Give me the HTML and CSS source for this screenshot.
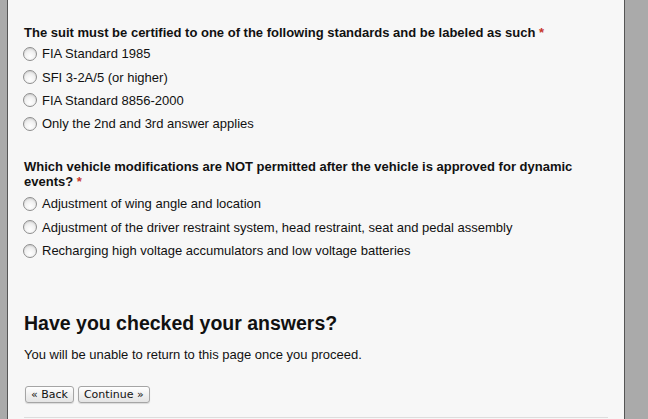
FILE: index.html
```html
<!DOCTYPE html>
<html>
<head>
<meta charset="utf-8">
<link rel="stylesheet" href="styles.css">
</head>
<body>
<div class="page">
  <form class="form">
    <fieldset class="question q1">
      <div class="qtitle">The suit must be certified to one of the following standards and be labeled as such <span class="req">*</span></div>
      <label class="opt"><input type="radio" name="a" class="radio"><span>FIA Standard 1985</span></label>
      <label class="opt"><input type="radio" name="a" class="radio"><span>SFI 3-2A/5 (or higher)</span></label>
      <label class="opt"><input type="radio" name="a" class="radio"><span>FIA Standard 8856-2000</span></label>
      <label class="opt"><input type="radio" name="a" class="radio"><span>Only the 2nd and 3rd answer applies</span></label>
    </fieldset>
    <fieldset class="question q2">
      <div class="qtitle">Which vehicle modifications are NOT permitted after the vehicle is approved for dynamic events? <span class="req">*</span></div>
      <label class="opt"><input type="radio" name="b" class="radio"><span>Adjustment of wing angle and location</span></label>
      <label class="opt"><input type="radio" name="b" class="radio"><span>Adjustment of the driver restraint system, head restraint, seat and pedal assembly</span></label>
      <label class="opt"><input type="radio" name="b" class="radio"><span>Recharging high voltage accumulators and low voltage batteries</span></label>
    </fieldset>
    <h2 class="heading">Have you checked your answers?</h2>
    <p class="note">You will be unable to return to this page once you proceed.</p>
    <div class="actions">
      <button type="button" class="btn">« Back</button>
      <button type="button" class="btn">Continue »</button>
    </div>
    <div class="rule"></div>
  </form>
</div>
</body>
</html>
```
FILE: styles.css
```css
html, body {
  margin: 0;
  padding: 0;
  height: 100%;
  background: #aaaaaa;
  overflow: hidden;
}
body {
  font-family: "Liberation Sans", Arial, Helvetica, sans-serif;
  color: #111;
}
.page {
  margin-left: 7px;
  width: 616px;
  height: 100%;
  background: #f7f7f7;
  border-left: 1px solid #555;
  border-right: 1px solid #555;
}
.form {
  padding: 26px 16px 0 16px;
}
.question {
  border: 0;
  margin: 0;
  padding: 0;
}
.qtitle {
  font-weight: bold;
  font-size: 13px;
  line-height: 14px;
  margin-bottom: 2px;
}
.req {
  color: #c8372d;
}
.opt {
  display: flex;
  align-items: center;
  height: 23.4px;
  font-size: 13px;
}
.radio {
  -webkit-appearance: none;
  appearance: none;
  width: 14px;
  height: 14px;
  margin: 0 5px 0 -1px;
  border-radius: 50%;
  border: 1px solid #8e8e8e;
  background: radial-gradient(circle at 50% 70%, #ffffff 0%, #f2f2f2 45%, #d6d6d6 100%);
  box-shadow: inset 0 1px 1px rgba(0,0,0,0.08);
  flex: none;
}
.q2 {
  margin-top: 23.5px;
}
.q2 .qtitle {
  line-height: 15px;
  margin-bottom: 3px;
}
.heading {
  font-size: 19.5px;
  line-height: 24px;
  font-weight: bold;
  margin: 49px 0 0 0;
}
.note {
  font-size: 13px;
  line-height: 16px;
  margin: 12px 0 0 0;
}
.actions {
  display: flex;
  gap: 4px;
  margin: 23px 0 0 1px;
}
.btn {
  font-family: "DejaVu Sans", "Liberation Sans", sans-serif;
  font-size: 11px;
  line-height: 15px;
  height: 17px;
  padding: 0 5px;
  border: 1px solid #a5a5a5;
  border-radius: 3px;
  color: #111;
  background: linear-gradient(#ffffff, #f0f0f0 50%, #e4e4e4);
  box-shadow: 0 1px 1px rgba(0,0,0,0.12);
}
.rule {
  margin-top: 14px;
  border-top: 1px solid #dddddd;
}
```
